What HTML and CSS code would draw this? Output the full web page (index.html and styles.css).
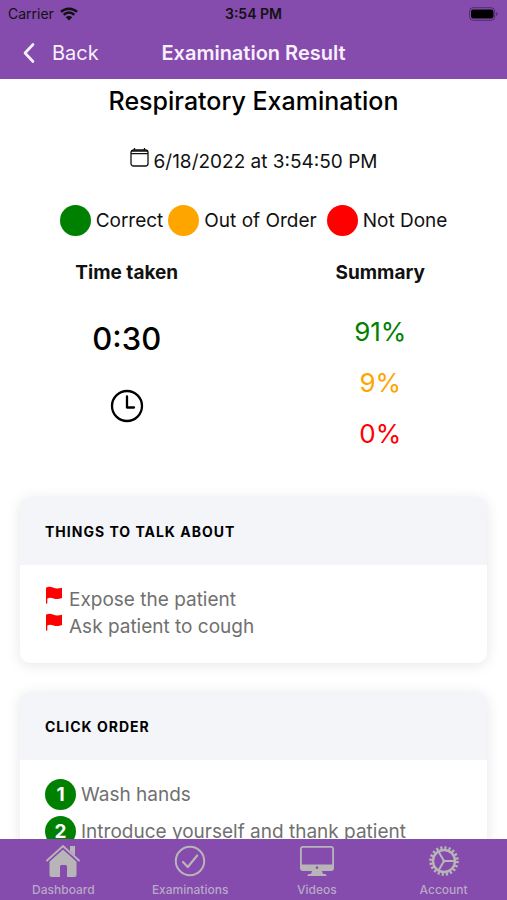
FILE: index.html
```html
<!DOCTYPE html>
<html lang="en">
<head>
<meta charset="utf-8">
<meta name="viewport" content="width=device-width, initial-scale=1">
<title>Examination Result</title>
<link rel="stylesheet" href="styles.css">
</head>
<body>
<div class="app">
  <header class="header">
    <div class="status">
      <span class="status-carrier">Carrier
        <svg width="18" height="14" viewBox="0 0 18 14" aria-hidden="true"><path d="M1 4.900A11.500 11.500 0 0 1 17 4.900M3.700 7.800a7.500 7.500 0 0 1 10.600 0" fill="none" stroke="currentColor" stroke-width="2.500"/><path d="M9 13.500 5.700 10.300a4.700 4.700 0 0 1 6.600 0Z" fill="currentColor"/></svg>
      </span>
      <span class="status-time">3:54 PM</span>
      <span class="status-battery">
        <svg width="30" height="14" viewBox="0 0 30 14" aria-hidden="true"><rect x=".7" y=".7" width="25" height="12.600" rx="3.500" fill="none" stroke="#000" stroke-opacity=".4"/><rect x="2" y="2.500" width="22.500" height="9" rx="2.200"/><path d="M27.200 5v4q1.500-.6 1.500-2t-1.500-2" fill-opacity=".4"/></svg>
      </span>
    </div>
    <div class="titlebar">
      <button class="back" type="button">
        <svg width="14" height="22" viewBox="0 0 14 22" aria-hidden="true"><path d="M11 2.500 3 11l8 8.500" fill="none" stroke="currentColor" stroke-width="2.700" stroke-linecap="round" stroke-linejoin="round"/></svg>
        Back
      </button>
      <h1 class="screen-title">Examination Result</h1>
    </div>
  </header>

  <main class="content">
    <h2 class="exam-name">Respiratory Examination</h2>
    <p class="exam-date">
      <svg width="19" height="19" viewBox="0 0 19 19" fill="none" stroke="currentColor" aria-hidden="true"><rect x="1" y="2" width="17" height="16" rx="2.500" stroke-width="1.300"/><path d="M1 5.600h17M1.500 3h16M4.500 0v2M14.500 0v2" stroke-width="1.300"/></svg>
      6/18/2022 at 3:54:50 PM
    </p>
    <ul class="legend">
      <li><span class="dot correct"></span>Correct</li>
      <li><span class="dot disordered"></span>Out of Order</li>
      <li class="legend-last"><span class="dot missed"></span>Not Done</li>
    </ul>

    <div class="stats">
      <section class="stat">
        <h3>Time taken</h3>
        <p class="duration">0:30</p>
        <svg class="clock" width="34" height="34" viewBox="0 0 34 34" fill="none" stroke="#000" stroke-linecap="round" stroke-linejoin="round" aria-hidden="true"><circle cx="17" cy="17" r="15" stroke-width="2.300"/><path d="M17 7.500V18.500h7" stroke-width="2.300"/></svg>
      </section>
      <section class="stat">
        <h3>Summary</h3>
        <ul class="scores">
          <li class="score-correct">91%</li>
          <li class="score-disordered">9%</li>
          <li class="score-missed">0%</li>
        </ul>
      </section>
    </div>

    <section class="card">
      <h3 class="card-title">THINGS TO TALK ABOUT</h3>
      <ul class="flags">
        <li><svg width="18" height="18" viewBox="0 0 18 18" fill="red" aria-hidden="true"><path d="M1 1.800C3.500.3 5.500.6 8 1.600c3 1.200 5.500 1 9 .1V12c-3 1.200-5.600 1.200-8.500.4-2.500-.8-4.300-.7-6.200 0V17a.6.600 0 0 1-1.300 0Z"/></svg>Expose the patient</li>
        <li><svg width="18" height="18" viewBox="0 0 18 18" fill="red" aria-hidden="true"><path d="M1 1.800C3.500.3 5.500.6 8 1.600c3 1.200 5.500 1 9 .1V12c-3 1.200-5.600 1.200-8.500.4-2.500-.8-4.300-.7-6.200 0V17a.6.600 0 0 1-1.300 0Z"/></svg>Ask patient to cough</li>
      </ul>
    </section>

    <section class="card">
      <h3 class="card-title">CLICK ORDER</h3>
      <ol class="steps">
        <li><span class="dot correct">1</span>Wash hands</li>
        <li><span class="dot correct">2</span>Introduce yourself and thank patient</li>
      </ol>
    </section>
  </main>

  <nav class="tabs">
    <a href="#dashboard">
      <svg width="36" height="34" viewBox="0 0 36 34" fill="currentColor" aria-hidden="true"><path d="M18 5.500 31.500 17.500V31q0 2-2 2H22V22.500q0-1.500-1.500-1.500h-4q-1.500 0-1.500 1.500V33H6.500q-2 0-2-2V17.500Z"/><path d="M2 16.500 18 2l16 14.500" fill="none" stroke="#854bad" stroke-width="4.500"/><path d="M25 2h5v9.500l-5-4.500Z"/><path d="M2 16.500 18 2l16 14.500" fill="none" stroke="currentColor" stroke-width="2" stroke-linecap="round"/></svg>
      Dashboard
    </a>
    <a href="#examinations">
      <svg width="36" height="34" viewBox="0 0 36 34" fill="none" stroke="currentColor" stroke-linecap="round" stroke-linejoin="round" aria-hidden="true"><circle cx="18" cy="17" r="14.200" stroke-width="2"/><path d="m11 18 4.800 5 9.400-11.500" stroke-width="2.200"/></svg>
      Examinations
    </a>
    <a href="#videos">
      <svg width="36" height="34" viewBox="0 0 36 34" fill="currentColor" aria-hidden="true"><path fill-rule="evenodd" d="M4 2h28q3 0 3 3v19q0 3-3 3H4q-3 0-3-3V5q0-3 3-3Zm0 1.800q-1.200 0-1.200 1.200v15.500h30.400V5q0-1.200-1.200-1.200ZM18 22.300a1.300 1.300 0 1 0 .01 0Z"/><path d="M13 27h10l1 3h2q1.500 0 1.500 2H8.500q0-2 1.500-2h2Z"/></svg>
      Videos
    </a>
    <a href="#account">
      <svg width="36" height="34" viewBox="0 0 36 34" fill="none" stroke="currentColor" aria-hidden="true"><circle cx="18" cy="17" r="13.300" stroke-width="3" stroke-dasharray="2.200 1.978"/><circle cx="18" cy="17" r="11" stroke-width="2.400"/><path d="M18 17h11M18 17l-5.500-9.500M18 17l-5.500 9.500" stroke-width="2"/><circle cx="18" cy="17" r="1.500" fill="currentColor" stroke="none"/></svg>
      Account
    </a>
  </nav>
</div>
</body>
</html>
```

FILE: styles.css
```css
* {
  box-sizing: border-box;
}

body,
h1,
h2,
h3,
p,
ul,
ol {
  margin: 0;
  padding: 0;
}

ul,
ol {
  list-style: none;
}

svg {
  flex: none;
}

body {
  font-family: Inter, "Liberation Sans", sans-serif;
  font-size: 19px;
  line-height: 28px;
  color: #111;
  background: #fff;
}

.app {
  display: flex;
  flex-direction: column;
  height: 100vh;
}

/* Header */

.header {
  flex: none;
  color: #f8effc;
  background: #854bad;
}

.status {
  display: grid;
  grid-template-columns: 1fr auto 1fr;
  align-items: center;
  height: 26px;
  padding: 0 8px;
  font-size: 14px;
  color: #111;
}

.status-carrier {
  display: flex;
  align-items: center;
  gap: 6px;
}

.status-time {
  font-weight: 600;
}

.status-battery {
  display: flex;
  justify-content: flex-end;
}

.titlebar {
  display: grid;
  grid-template-columns: 1fr auto 1fr;
  align-items: center;
  height: 53px;
  padding: 0 22px;
  font-size: 20px;
}

.back {
  display: flex;
  align-items: center;
  justify-self: start;
  gap: 16px;
  padding: 0;
  border: 0;
  font: inherit;
  color: inherit;
  background: none;
}

.screen-title {
  font-size: 20px;
  font-weight: 600;
}

/* Result overview */

.content {
  flex: 1;
  min-height: 0;
  padding: 4px 20px 30px;
  overflow-y: auto;
  scrollbar-width: none;
}

.exam-name {
  font-size: 25px;
  font-weight: 500;
  line-height: 36px;
  text-align: center;
  color: #000;
}

.exam-date {
  display: flex;
  justify-content: center;
  gap: 5px;
  margin-top: 29px;
}

.legend {
  display: flex;
  justify-content: center;
  gap: 5px;
  margin-top: 29px;
}

.legend li {
  display: flex;
  align-items: center;
  gap: 5px;
}

.legend .legend-last {
  margin-left: 5px;
}

.dot {
  display: flex;
  flex: none;
  align-items: center;
  justify-content: center;
  width: 31px;
  height: 31px;
  border-radius: 50%;
  font-weight: 700;
  color: #fff;
}

.correct {
  background: green;
}

.disordered {
  background: orange;
}

.missed {
  background: red;
}

.stats {
  display: grid;
  grid-template-columns: 1fr 1fr;
  margin: 23px -20px 0;
}

.stat {
  display: flex;
  flex-direction: column;
  align-items: center;
}

.stat h3 {
  font-size: 19px;
  font-weight: 700;
}

.duration {
  margin-top: 32px;
  font-size: 31px;
  font-weight: 500;
  line-height: 40px;
  color: #000;
}

.clock {
  margin-top: 30px;
}

.scores {
  margin-top: 19px;
  font-size: 26px;
  line-height: 51px;
  text-align: center;
}

.score-correct {
  color: green;
}

.score-disordered {
  color: orange;
}

.score-missed {
  color: red;
}

/* Cards */

.card {
  margin-top: 29px;
  overflow: hidden;
  border-radius: 10px;
  background: #fff;
  box-shadow: 0 2px 14px rgba(0, 0, 0, 0.1);
}

.stats + .card {
  margin-top: 38px;
}

.card-title {
  padding: 21px 25px 19px;
  font-size: 14px;
  font-weight: 700;
  line-height: 28px;
  letter-spacing: 1px;
  color: #000;
  background: #f3f5f9;
}

.flags,
.steps {
  color: #707070;
}

.flags {
  padding: 21px 25px 23px;
  line-height: 27px;
}

.flags li {
  display: flex;
  gap: 6px;
}

.steps {
  display: grid;
  gap: 6px;
  padding: 19px 25px 24px;
}

.steps li {
  display: flex;
  align-items: center;
  gap: 5px;
}

/* Bottom navigation */

.tabs {
  display: grid;
  flex: none;
  grid-template-columns: repeat(4, 1fr);
  padding: 5px 0 2px;
  background: #854bad;
}

.tabs a {
  display: flex;
  flex-direction: column;
  align-items: center;
  gap: 3px;
  font-size: 12px;
  font-weight: 500;
  line-height: 17px;
  text-decoration: none;
  color: #b9a9c6;
}

.tabs svg {
  color: #b8b5b9;
}
```
